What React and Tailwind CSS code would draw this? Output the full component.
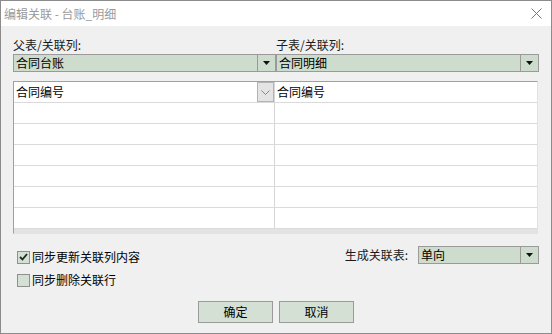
import React from "react";

const FONT = "font-['Noto_Sans_CJK_SC','Microsoft_YaHei',sans-serif]";

function Arrow() {
  return (
    <svg width="7" height="4" viewBox="0 0 7 4">
      <path d="M0 0 L7 0 L3.5 4 Z" fill="#111" />
    </svg>
  );
}

function Combo({ value, className = "" }) {
  return (
    <div
      className={`flex h-[18px] border border-[#9a9a9a] bg-[#cddccd] ${className}`}
    >
      <div className="flex-1 pl-[2px] text-[12px] leading-[16px] text-black">
        {value}
      </div>
      <div className="flex w-[18px] items-center justify-center border-l border-[#9a9a9a]">
        <Arrow />
      </div>
    </div>
  );
}

function CheckBox({ checked, label }) {
  return (
    <div className="flex h-[16px] items-center gap-[2px]">
      <div className="flex h-[13px] w-[13px] items-center justify-center border border-[#8f8f8f] bg-[#d3e0d3]">
        {checked && (
          <svg width="9" height="8" viewBox="0 0 9 8">
            <path
              d="M1 4 L3.5 6.5 L8 1"
              fill="none"
              stroke="#1f2a1f"
              strokeWidth="1.8"
            />
          </svg>
        )}
      </div>
      <span className="text-[12px] leading-[16px] text-black">{label}</span>
    </div>
  );
}

export default function App() {
  const rows = [0, 1, 2, 3, 4, 5, 6];

  return (
    <div
      className={`${FONT} flex h-[334px] w-[552px] flex-col overflow-hidden border border-[#8c8c8c] bg-[#f0f0f0]`}
    >
      {/* Title bar */}
      <div className="flex h-[25px] shrink-0 items-center justify-between bg-white pl-[3px] pr-[9px]">
        <span className="text-[12px] text-[#9a9a9a]">编辑关联 - 台账_明细</span>
        <svg width="11" height="11" viewBox="0 0 11 11">
          <path d="M0.5 0.5 L10.5 10.5 M10.5 0.5 L0.5 10.5" stroke="#777" strokeWidth="1" />
        </svg>
      </div>

      <div className="flex flex-col px-[12px] pt-[11px]">
        {/* Labels */}
        <div className="flex h-[17px] text-[12px] leading-[16px] text-[#1a1a1a]">
          <div className="w-[263px]">父表/关联列:</div>
          <div className="flex-1">子表/关联列:</div>
        </div>

        {/* Table combos */}
        <div className="flex">
          <Combo value="合同台账" className="w-[263px]" />
          <Combo value="合同明细" className="flex-1" />
        </div>

        {/* Grid */}
        <div className="mt-[9px] mr-[1px] flex flex-col border-t border-l border-r border-b border-t-[#a0a0a0] border-l-[#a0a0a0] border-r-[#e2e2e2] border-b-[#e2e2e2] bg-white">
          {rows.map((r) => (
            <div key={r} className="flex h-[21px] border-b border-[#dadada]">
              <div className="relative w-[261px] border-r border-[#d6d6d6] pl-[2px] text-[12px] leading-[20px] text-black">
                {r === 0 && "合同编号"}
                {r === 0 && (
                  <div className="absolute top-0 right-0 flex h-[20px] w-[17px] items-center justify-center border border-[#b4b4b4] bg-[#e4e4e4]">
                    <svg width="9" height="5" viewBox="0 0 9 5">
                      <path d="M0.5 0.5 L4.5 4.5 L8.5 0.5" fill="none" stroke="#8a8a8a" strokeWidth="1" />
                    </svg>
                  </div>
                )}
              </div>
              <div className="flex-1 pl-[2px] text-[12px] leading-[20px] text-black">
                {r === 0 && "合同编号"}
              </div>
            </div>
          ))}
          <div className="h-[4px] bg-[#e3e3e3]" />
        </div>

        {/* Options */}
        <div className="flex justify-between pt-[12px]">
          <div className="mt-[3px] flex flex-col gap-[7px] pl-[4px]">
            <CheckBox checked label="同步更新关联列内容" />
            <CheckBox label="同步删除关联行" />
          </div>
          <div className="flex h-[18px] items-center gap-[10px]">
            <span className="text-[12px] text-[#1a1a1a]">生成关联表:</span>
            <Combo value="单向" className="w-[121px]" />
          </div>
        </div>

        {/* Buttons */}
        <div className="mt-[13px] flex justify-center gap-[6px]">
          <button className="h-[22px] w-[75px] border border-[#9a9a9a] bg-[#d3e0d3] text-[12px] text-black">
            确定
          </button>
          <button className="h-[22px] w-[75px] border border-[#9a9a9a] bg-[#d3e0d3] text-[12px] text-black">
            取消
          </button>
        </div>
      </div>
    </div>
  );
}
